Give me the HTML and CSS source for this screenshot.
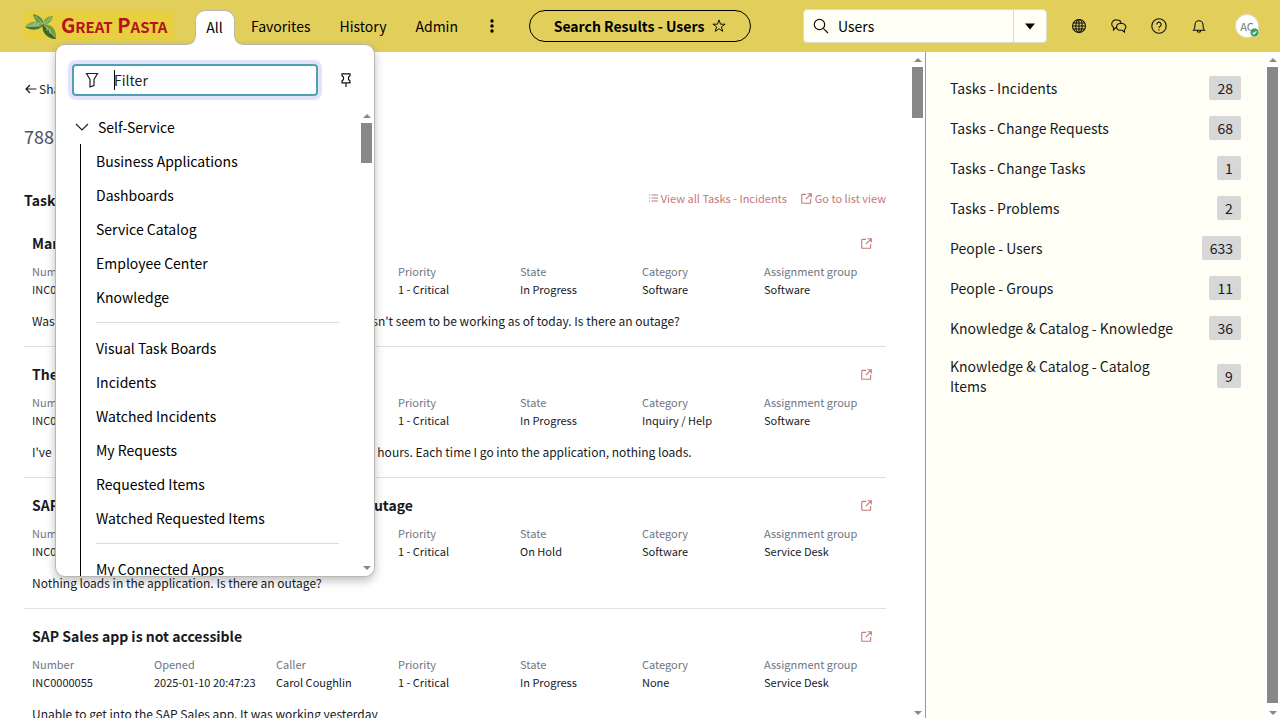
FILE: index.html
```html
<!DOCTYPE html>
<html lang="en">
<head>
<meta charset="utf-8">
<title>Search Results - Users</title>
<link rel="stylesheet" href="styles.css">
</head>
<body>
<svg class="sprite" aria-hidden="true">
  <symbol id="open" viewBox="0 0 12 12"><path d="M5.500 1.500h-4a.7.7 0 0 0-.7.7v8.300a.7.7 0 0 0 .7.7h8.300a.7.7 0 0 0 .7-.7v-4M7 .8h4.200V5M11 1 5.300 6.700"/></symbol>
</svg>
<header class="topbar">
  <a class="logo" href="#" aria-label="Great Pasta">
    <svg class="leaf" viewBox="0 0 32 27" aria-hidden="true">
      <path d="M8 1C14 2 19 6 19 12C13 11 9 7 8 1Z" fill="#5f8f40"/>
      <path d="M19 11C18 6 22 3 28 3C27 8 24 12 19 11Z" fill="#7da653"/>
      <path d="M0 14C4 8 12 7 19 11C17 17 7 19 0 14Z" fill="#86ab5c"/>
      <path d="M0 14C6 18 16 17 19 11C12 14 7 14 0 14Z" fill="#447530"/>
      <path d="M18 11C26 11 32 16 31 26C22 25 16 19 18 11Z" fill="#6f9b4a"/>
      <path d="M18 11C23 16 27 21 31 26C22 26 16 19 18 11Z" fill="#386829"/>
      <path d="M4 13h12M10 3l8 8M26 5 19 11M19 12l11 12M22 14v4M25 16v5M8 12l3-2M12 12l2-2" fill="none" stroke="#c3d69a" stroke-width=".7"/>
    </svg>
    <span class="brand">G<small>REAT</small> P<small>ASTA</small></span>
  </a>
  <nav class="nav">
    <button class="tab tab-active" aria-expanded="true">All</button>
    <button class="tab">Favorites</button>
    <button class="tab">History</button>
    <button class="tab">Admin</button>
    <button class="tab more" aria-label="More"><svg width="4" height="14" viewBox="0 0 4 14"><circle cx="2" cy="2" r="1.700"/><circle cx="2" cy="7" r="1.700"/><circle cx="2" cy="12" r="1.700"/></svg></button>
  </nav>
  <button class="pill">Search Results - Users
    <svg width="14" height="14" viewBox="0 0 14 14" fill="none" stroke="currentColor" stroke-width=".9"><path d="M7 .9 8.500 5.200h4.600L9.400 7.900l1.400 4.500L7 9.700l-3.800 2.700 1.400-4.500L.9 5.200h4.600Z"/></svg>
  </button>
  <form class="search">
    <svg width="16" height="16" viewBox="0 0 16 16" fill="none" stroke="#111" stroke-width="1.200"><circle cx="6.500" cy="6.500" r="5.200"/><path d="m10.300 10.300 4.700 4.700"/></svg>
    <input class="search-input" type="text" value="Users" aria-label="Search">
    <button class="search-scope" type="button" aria-label="Search scope"><svg width="12" height="7" viewBox="0 0 12 7"><path d="M1 .5h10L6 6.500Z"/></svg></button>
  </form>
  <div class="tools">
    <button aria-label="Language"><svg width="16" height="16" viewBox="0 0 16 16"><circle cx="8" cy="8" r="6.500"/><ellipse cx="8" cy="8" rx="3.200" ry="6.500"/><path d="M8 1.500v13M1.500 8h13M2.300 5h11.400M2.300 11h11.400"/></svg></button>
    <button aria-label="Conversations"><svg width="16" height="16" viewBox="0 0 16 16"><path d="M5.500 9.500H4.800L2.500 11.800V9.200A4 4 0 0 1 5.500 2h1A4 4 0 0 1 10.200 4.800"/><path d="M8.800 5.500h2.400a3.500 3.500 0 0 1 2.300 6.200v2.500l-2.300-1.900H9a3.400 3.400 0 0 1-.2-6.800Z"/></svg></button>
    <button aria-label="Help"><svg width="16" height="16" viewBox="0 0 16 16"><circle cx="8" cy="8" r="7.200"/><path d="M5.800 6.400a2.200 2.200 0 1 1 3.400 1.800C8.300 8.700 8 9 8 10M8 11.200v1.200"/></svg></button>
    <button aria-label="Notifications"><svg width="16" height="16" viewBox="0 0 16 16"><path d="M2.500 12.300c1.300-1.200 1.500-2 1.500-5.500a4 4 0 0 1 8 0c0 3.500.2 4.300 1.500 5.500ZM6.300 12.500a1.700 1.700 0 0 0 3.400 0"/></svg></button>
  </div>
  <button class="avatar">AC<svg class="status" viewBox="0 0 8 8" aria-hidden="true"><circle cx="4" cy="4" r="3.700" fill="#35a164"/><path d="m2.300 4.100 1.200 1.200 2.200-2.300" fill="none" stroke="#fff"/></svg></button>
</header>

<section class="menu" aria-label="All menu">
  <div class="menu-head">
    <label class="filter">
      <svg width="14" height="16" viewBox="0 0 14 16" fill="none" stroke="#222" stroke-width="1.200"><path d="M1.500 1.500h11L9 7.500v6L5 14.800V7.500Z"/></svg>
      <span class="caret"></span>
      <input class="filter-input" type="text" placeholder="Filter" aria-label="Filter">
    </label>
    <button class="pin" aria-label="Pin menu"><svg width="10" height="14" viewBox="0 0 10 14" fill="none" stroke="#111" stroke-width="1.200"><path d="M1 .8h8v2L7.500 4v2.500L9 8v1.800H1V8l1.500-1.500V4L1 2.800ZM5 10v4"/></svg></button>
  </div>
  <div class="menu-body">
    <div class="menu-list">
      <button class="group"><svg width="14" height="8" viewBox="0 0 14 8" fill="none" stroke="#222" stroke-width="1.200"><path d="m1 1 6 6 6-6"/></svg>Self-Service</button>
      <div class="items">
        <a href="#">Business Applications</a>
        <a href="#">Dashboards</a>
        <a href="#">Service Catalog</a>
        <a href="#">Employee Center</a>
        <a href="#">Knowledge</a>
        <hr>
        <a href="#">Visual Task Boards</a>
        <a href="#">Incidents</a>
        <a href="#">Watched Incidents</a>
        <a href="#">My Requests</a>
        <a href="#">Requested Items</a>
        <a href="#">Watched Requested Items</a>
        <hr>
        <a href="#">My Connected Apps</a>
      </div>
    </div>
    <div class="scrollbar scrollbar-menu"><i class="up"></i><i class="thumb thumb-menu"></i><i class="down"></i></div>
  </div>
</section>

<div class="page">
  <main class="results">
    <div class="content">
      <a class="back" href="#"><svg width="12" height="10" viewBox="0 0 12 10" fill="none" stroke="currentColor" stroke-width="1.200"><path d="M11.500 5H1M5 1 1 5l4 4"/></svg>Share</a>
      <h1 class="count">788 results for Users</h1>
      <div class="section-head">
        <h2>Tasks - Incidents</h2>
        <a href="#"><svg width="9" height="8" viewBox="0 0 9 8"><path d="M0 1h1M0 4h1M0 7h1M2.500 1H9M2.500 4H9M2.500 7H9"/></svg>View all Tasks - Incidents</a>
        <a href="#"><svg width="11" height="11"><use href="#open"/></svg>Go to list view</a>
      </div>
      <article class="row">
        <div class="row-title"><h3>Manager can't access SAP Controlling</h3><a href="#" aria-label="Open"><svg width="11" height="11"><use href="#open"/></svg></a></div>
        <dl>
          <div><dt>Number</dt><dd>INC0000051</dd></div><div><dt>Opened</dt><dd>2025-01-10 20:47:10</dd></div><div><dt>Caller</dt><dd>Joe Employee</dd></div><div><dt>Priority</dt><dd>1 - Critical</dd></div><div><dt>State</dt><dd>In Progress</dd></div><div><dt>Category</dt><dd>Software</dd></div><div><dt>Assignment group</dt><dd>Software</dd></div>
        </dl>
        <p>Was trying to open the SAP Controlling application and it doesn't seem to be working as of today. Is there an outage?</p>
      </article>
      <article class="row">
        <div class="row-title"><h3>The SAP HR application is not accessible</h3><a href="#" aria-label="Open"><svg width="11" height="11"><use href="#open"/></svg></a></div>
        <dl>
          <div><dt>Number</dt><dd>INC0000053</dd></div><div><dt>Opened</dt><dd>2025-01-10 20:48:02</dd></div><div><dt>Caller</dt><dd>Margaret Gray</dd></div><div><dt>Priority</dt><dd>1 - Critical</dd></div><div><dt>State</dt><dd>In Progress</dd></div><div><dt>Category</dt><dd>Inquiry / Help</dd></div><div><dt>Assignment group</dt><dd>Software</dd></div>
        </dl>
        <p>I've been trying to use the SAP HR application for the past few hours. Each time I go into the application, nothing loads.</p>
      </article>
      <article class="row">
        <div class="row-title"><h3>SAP Materials Management is slow or there is an outage</h3><a href="#" aria-label="Open"><svg width="11" height="11"><use href="#open"/></svg></a></div>
        <dl>
          <div><dt>Number</dt><dd>INC0000054</dd></div><div><dt>Opened</dt><dd>2025-01-10 20:50:12</dd></div><div><dt>Caller</dt><dd>Christen Mitchell</dd></div><div><dt>Priority</dt><dd>1 - Critical</dd></div><div><dt>State</dt><dd>On Hold</dd></div><div><dt>Category</dt><dd>Software</dd></div><div><dt>Assignment group</dt><dd>Service Desk</dd></div>
        </dl>
        <p>Nothing loads in the application. Is there an outage?</p>
      </article>
      <article class="row">
        <div class="row-title"><h3>SAP Sales app is not accessible</h3><a href="#" aria-label="Open"><svg width="11" height="11"><use href="#open"/></svg></a></div>
        <dl>
          <div><dt>Number</dt><dd>INC0000055</dd></div><div><dt>Opened</dt><dd>2025-01-10 20:47:23</dd></div><div><dt>Caller</dt><dd>Carol Coughlin</dd></div><div><dt>Priority</dt><dd>1 - Critical</dd></div><div><dt>State</dt><dd>In Progress</dd></div><div><dt>Category</dt><dd>None</dd></div><div><dt>Assignment group</dt><dd>Service Desk</dd></div>
        </dl>
        <p>Unable to get into the SAP Sales app. It was working yesterday</p>
      </article>
    </div>
    <div class="scrollbar"><i class="up"></i><i class="thumb thumb-results"></i><i class="down"></i></div>
  </main>
  <aside class="facets">
    <nav class="facet-list">
      <a href="#"><span>Tasks - Incidents</span><b>28</b></a>
      <a href="#"><span>Tasks - Change Requests</span><b>68</b></a>
      <a href="#"><span>Tasks - Change Tasks</span><b>1</b></a>
      <a href="#"><span>Tasks - Problems</span><b>2</b></a>
      <a href="#"><span>People - Users</span><b>633</b></a>
      <a href="#"><span>People - Groups</span><b>11</b></a>
      <a href="#"><span>Knowledge &amp; Catalog - Knowledge</span><b>36</b></a>
      <a href="#"><span>Knowledge &amp; Catalog - Catalog Items</span><b>9</b></a>
    </nav>
    <div class="scrollbar"><i class="up"></i><i class="thumb thumb-facets"></i><i class="down"></i></div>
  </aside>
</div>
</body>
</html>
```
FILE: styles.css
```css
* { box-sizing: border-box; }
html, body { height: 100%; }
body {
  margin: 0;
  padding-right: 8px;
  display: flex;
  flex-direction: column;
  overflow: hidden;
  background: #fff;
  color: #181a1f;
  font: 14px/20px "Noto Sans CJK SC", "Noto Sans", sans-serif;
}
button, input { font: inherit; color: inherit; border: 0; background: none; padding: 0; margin: 0; outline: 0; }
a { color: inherit; text-decoration: none; }
h1, h2, h3, p, dl, dd { margin: 0; }
svg { display: block; flex: none; }
.sprite { position: absolute; width: 0; height: 0; }

/* Top bar */
.topbar { flex: none; height: 52px; display: flex; align-items: center; padding: 0 21px 0 24px; background: #e2cf5b; color: #000; }
.logo { width: 150px; height: 28px; display: flex; align-items: center; gap: 4px; padding-left: 1px; background: #e8cf3e; flex: none; }
.leaf { width: 32px; height: 27px; }
.brand { color: #b5141c; font-size: 20px; line-height: 26px; font-weight: bold; white-space: nowrap; }
.brand small { font-size: 15px; }
.nav { display: flex; gap: 1px; align-self: stretch; padding-top: 10px; margin-left: 21px; }
.tab { height: 32px; padding: 0 14px; white-space: nowrap; }
.tab-active { position: relative; z-index: 3; height: 35px; width: 40px; margin-right: 1px; padding: 0 1px 3px 0; background: #fff; border: 1px solid #b9b8b0; border-bottom: 0; border-radius: 10px 10px 0 0; }
.tab-active::before, .tab-active::after { content: ""; position: absolute; bottom: 0; width: 8px; height: 8px; }
.tab-active::before { right: 38px; background: radial-gradient(circle at 0 0, transparent 6px, #b9b8b0 7px, #fff 8px); }
.tab-active::after { left: 38px; background: radial-gradient(circle at 100% 0, transparent 6px, #b9b8b0 7px, #fff 8px); }
.more { padding: 0 17px; }
.pill { width: 222px; height: 32px; margin-left: 18px; display: flex; align-items: center; justify-content: center; gap: 8px; border: 1px solid #000; border-radius: 16px; font-weight: bold; white-space: nowrap; flex: none; }
.search { width: 244px; height: 34px; margin-left: auto; display: flex; align-items: center; padding-left: 9px; background: #fffff5; border: 1px solid #dedcc8; border-radius: 4px; flex: none; }
.search-input { flex: 1; min-width: 0; margin-left: 9px; }
.search-scope { align-self: stretch; width: 33px; display: flex; align-items: center; justify-content: center; border-left: 1px solid #dedcc8; }
.tools { display: flex; gap: 24px; margin-left: 24px; }
.tools svg { fill: none; stroke: #111; stroke-width: 1.100; }
.avatar { position: relative; width: 24px; height: 24px; margin-left: 28px; border: 1px solid #ddd; border-radius: 50%; background: #fff; color: #727680; font-size: 11px; line-height: 20px; }
.status { position: absolute; right: -1px; bottom: 0; width: 9px; height: 9px; background: #fff; border-radius: 50%; }

/* Navigator menu */
.menu { position: absolute; z-index: 2; left: 55px; top: 44px; width: 320px; height: 533px; display: flex; flex-direction: column; overflow: hidden; background: #fff; color: #000; border: 1px solid #b9b8b0; border-radius: 10px; box-shadow: 0 4px 10px rgba(0, 0, 0, .25); }
.menu-head { display: flex; align-items: center; padding: 19px 23px 12px 16px; }
.filter { flex: 1; height: 32px; display: flex; align-items: center; padding: 0 11px; border: 2px solid #4ea1ae; border-radius: 4px; box-shadow: 0 0 0 4px #e0e3fb; }
.caret { width: 1px; height: 20px; margin-left: 15px; background: #000; }
.filter-input { flex: 1; min-width: 0; margin-left: -1px; }
.filter-input::placeholder { color: #222; opacity: 1; }
.pin { margin-left: 23px; }
.menu-body { flex: 1; min-height: 0; display: flex; }
.menu-list { flex: 1; overflow: hidden; padding: 2px 0 0 19px; }
.group { height: 34px; display: flex; align-items: center; gap: 9px; }
.items { border-left: 1px solid #000; margin-left: 5px; padding-left: 15px; }
.items a { display: block; line-height: 34px; }
.items hr { margin: 8px 20px 8px 0; border: 0; border-top: 1px solid #dcdcdc; }

/* Scroll bars */
.scrollbar { flex: none; width: 15px; display: flex; flex-direction: column; align-items: center; padding: 6px 0 3px; background: #fff; }
.scrollbar i { flex: none; }
.scrollbar-menu { padding-bottom: 6px; }
.up, .down { border: 4px solid transparent; }
.up { border-top: 0; border-bottom-color: #888; }
.down { border-bottom: 0; border-top-color: #888; margin-top: auto; }
.thumb { width: 11px; margin-top: 5px; background: #888; }
.thumb-menu { height: 40px; }
.thumb-results { height: 51px; }
.scrollbar .thumb-facets { flex: 1; margin-bottom: 8px; }

/* Results */
.page { flex: 1; min-height: 0; display: flex; }
.results { flex: 1; min-width: 0; display: flex; border-right: 1px solid #999; }
.content { flex: 1; min-width: 0; overflow: hidden; padding: 27px 24px 0; }
.back { display: flex; align-items: center; gap: 2px; padding-left: 1px; font-size: 12px; }
.count { margin-top: 25px; font-size: 18px; line-height: 24px; font-weight: normal; color: #4b5060; }
.section-head { display: flex; align-items: flex-start; gap: 14px; margin-top: 42px; font-size: 11px; line-height: 16px; color: #c67878; }
.section-head h2 { flex: 1; font-size: 14px; line-height: 20px; color: #181a1f; }
.section-head a { display: flex; align-items: center; gap: 3px; }
.section-head svg, .row svg { fill: none; stroke: #c67878; stroke-width: 1.200; }
.row { height: 131px; padding: 16px 0 0 8px; border-bottom: 1px solid #dedfe0; }
.section-head + .row { margin-top: 6px; }
.row-title { display: flex; align-items: center; justify-content: space-between; padding-right: 14px; }
.row h3 { font-size: 14px; line-height: 22px; white-space: nowrap; }
.row dl { display: grid; grid-template-columns: repeat(7, 1fr); margin-top: 8px; font-size: 11px; line-height: 18px; }
.row dt { color: #70757f; }
.row dl div { white-space: nowrap; }
.row p { margin-top: 14px; font-size: 12px; line-height: 18px; white-space: nowrap; }

/* Result categories */
.facets { flex: none; width: 354px; display: flex; background: #fffff5; }
.facet-list { flex: 1; padding: 16px 24px; }
.facet-list a { min-height: 40px; display: flex; align-items: center; justify-content: space-between; gap: 16px; padding: 8px 0; }
.facet-list span { max-width: 232px; }
.facet-list b { min-width: 24px; padding: 0 8px; line-height: 24px; font-weight: normal; text-align: center; background: #d7d7d7; border-radius: 2px; }
```
